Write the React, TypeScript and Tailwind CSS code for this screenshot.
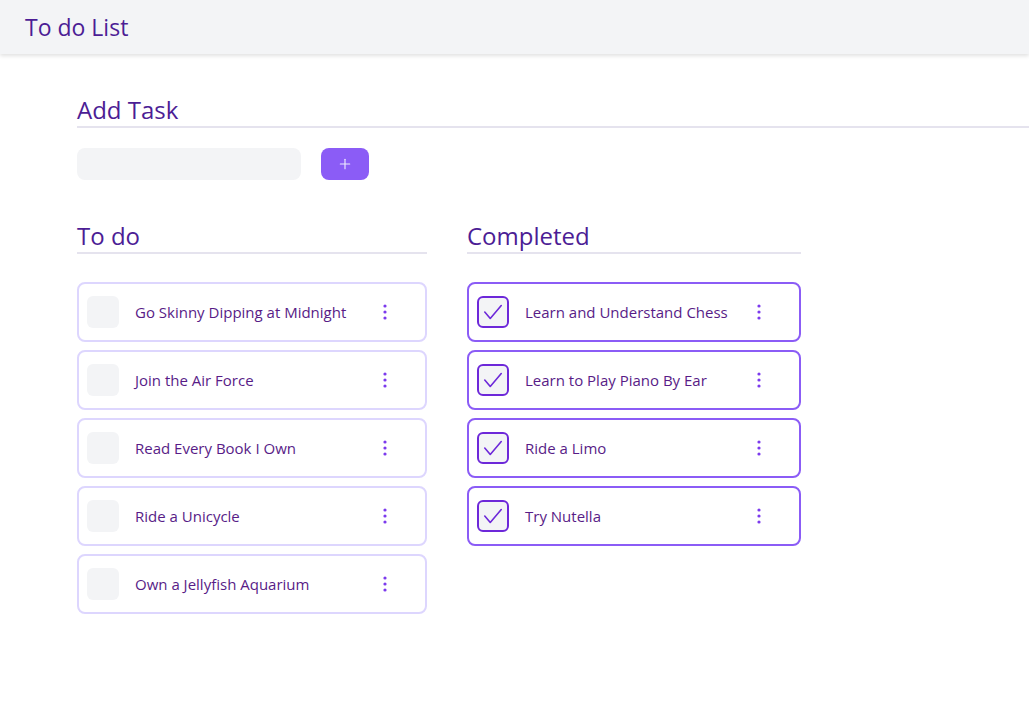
import { Plus } from 'lucide-react'

type Task = { id: number; title: string; done: boolean }

const tasks: Task[] = [
  { id: 1, title: 'Go Skinny Dipping at Midnight', done: false },
  { id: 2, title: 'Join the Air Force', done: false },
  { id: 3, title: 'Read Every Book I Own', done: false },
  { id: 4, title: 'Ride a Unicycle', done: false },
  { id: 5, title: 'Own a Jellyfish Aquarium', done: false },
  { id: 6, title: 'Learn and Understand Chess', done: true },
  { id: 7, title: 'Learn to Play Piano By Ear', done: true },
  { id: 8, title: 'Ride a Limo', done: true },
  { id: 9, title: 'Try Nutella', done: true },
]

function Dots() {
  return (
    <svg width="24" height="24" viewBox="0 0 24 24" className="text-[#7c3aed]">
      <circle cx="12" cy="6" r="1.6" fill="currentColor" />
      <circle cx="12" cy="12" r="1.6" fill="currentColor" />
      <circle cx="12" cy="18" r="1.6" fill="currentColor" />
    </svg>
  )
}

function TaskCard({ task }: { task: Task }) {
  return (
    <div
      className={`flex h-[60px] items-center rounded-lg border-2 bg-white px-2 ${
        task.done ? 'border-[#8b5cf6]' : 'border-[#ddd6fe]'
      }`}
    >
      {task.done ? (
        <div className="flex h-8 w-8 shrink-0 items-center justify-center rounded-md border-2 border-[#6d28d9] bg-[#f3f4f6]">
          <svg width="22" height="22" viewBox="0 0 24 24" fill="none" stroke="#6d28d9" strokeWidth="1.75" strokeLinecap="round" strokeLinejoin="round">
            <polyline points="3,12 9,19 21,5" />
          </svg>
        </div>
      ) : (
        <div className="h-8 w-8 shrink-0 rounded-md bg-[#f3f4f6]" />
      )}
      <span className="ml-4 flex-1 text-[15px] text-[#581c87]">{task.title}</span>
      <div className="mr-5 flex w-6 justify-center">
        <Dots />
      </div>
    </div>
  )
}

function Column({ title, items, width }: { title: string; items: Task[]; width: string }) {
  return (
    <section className={width}>
      <h2 className="border-b-2 border-[#e5e3ee] pt-0.5 text-[24px] leading-8 text-[#4c1d95]">{title}</h2>
      <div className="mt-7 flex flex-col gap-2">
        {items.map((t) => (
          <TaskCard key={t.id} task={t} />
        ))}
      </div>
    </section>
  )
}

export default function App() {
  const todo = tasks.filter((t) => !t.done)
  const done = tasks.filter((t) => t.done)

  return (
    <div className="min-h-screen bg-white" style={{ fontFamily: '"Open Sans", "Noto Sans", sans-serif' }}>
      <header className="flex h-[54px] items-center bg-[#f3f4f6] px-[25px] shadow-[0_2px_4px_rgba(0,0,0,0.12)]">
        <h1 className="text-[23px] text-[#4c1d95]">To do List</h1>
      </header>

      <main className="pl-[77px] pt-[38px]">
        <h2 className="border-b-2 border-[#e5e3ee] pt-0.5 text-[24px] leading-8 text-[#4c1d95]">Add Task</h2>
        <div className="mt-5 flex items-center gap-5">
          <input className="h-8 w-[224px] rounded-lg bg-[#f3f4f6] px-3 text-sm outline-none" />
          <button className="flex h-8 w-12 items-center justify-center rounded-lg bg-[#8b5cf6] text-[#ede9fe]">
            <Plus size={16} strokeWidth={1.75} />
          </button>
        </div>

        <div className="mt-[38px] flex items-start gap-10">
          <Column title="To do" items={todo} width="w-[350px]" />
          <Column title="Completed" items={done} width="w-[334px]" />
        </div>
      </main>
    </div>
  )
}
